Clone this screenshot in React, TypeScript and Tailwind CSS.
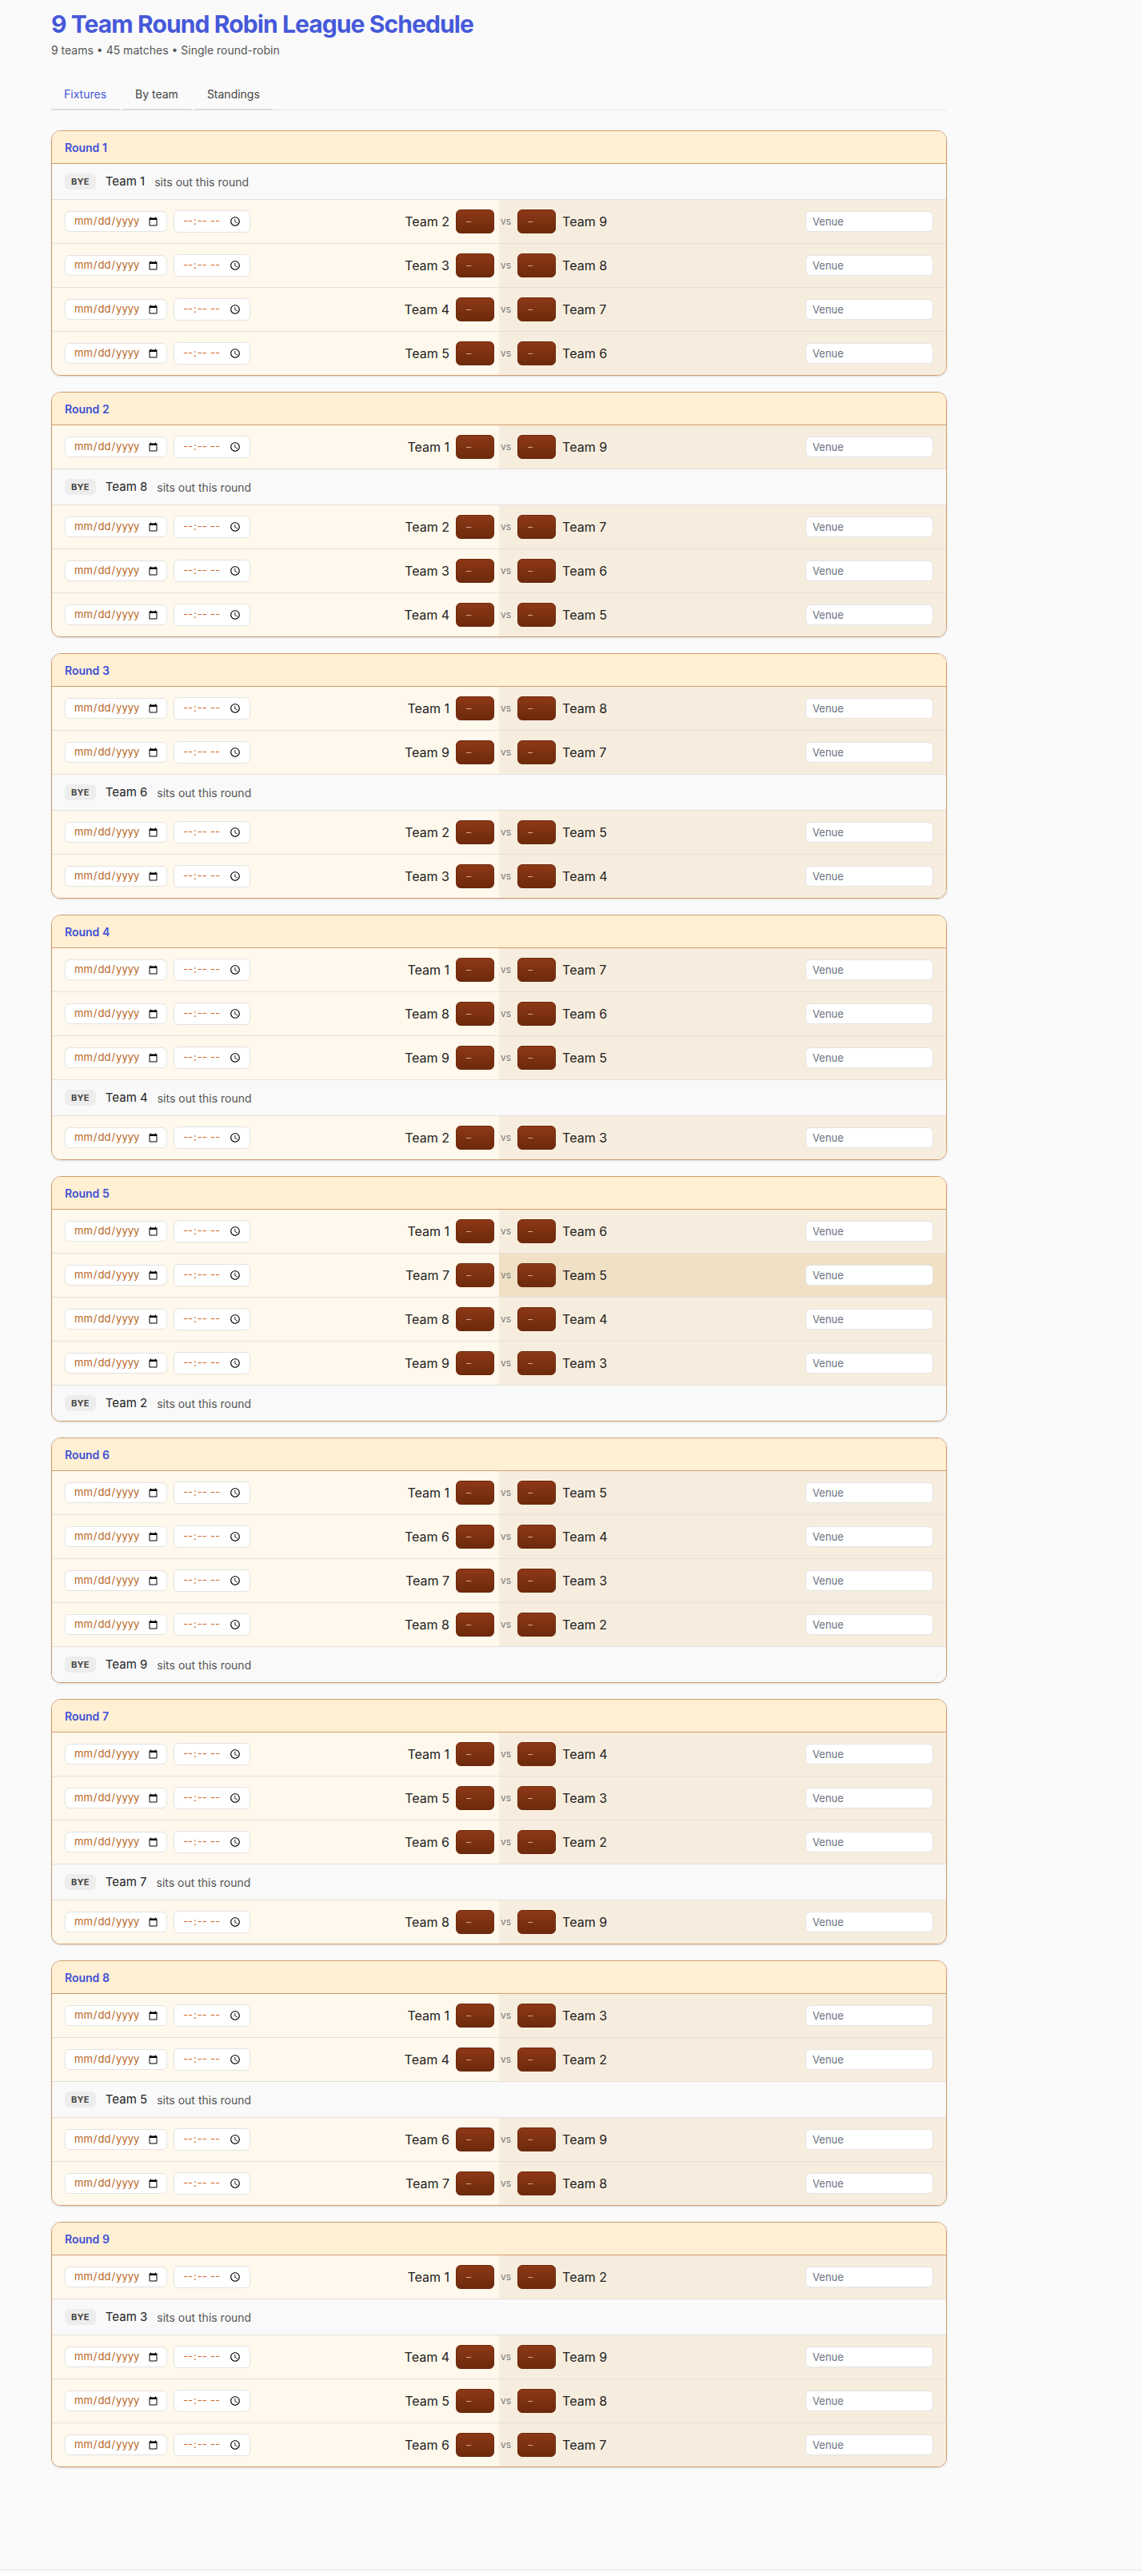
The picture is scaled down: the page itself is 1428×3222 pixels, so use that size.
import React from "react";

type Slot = { bye: string } | { home: string; away: string; hot?: boolean };

const rounds: Slot[][] = [
  [{ bye: "Team 1" }, { home: "Team 2", away: "Team 9" }, { home: "Team 3", away: "Team 8" }, { home: "Team 4", away: "Team 7" }, { home: "Team 5", away: "Team 6" }],
  [{ home: "Team 1", away: "Team 9" }, { bye: "Team 8" }, { home: "Team 2", away: "Team 7" }, { home: "Team 3", away: "Team 6" }, { home: "Team 4", away: "Team 5" }],
  [{ home: "Team 1", away: "Team 8" }, { home: "Team 9", away: "Team 7" }, { bye: "Team 6" }, { home: "Team 2", away: "Team 5" }, { home: "Team 3", away: "Team 4" }],
  [{ home: "Team 1", away: "Team 7" }, { home: "Team 8", away: "Team 6" }, { home: "Team 9", away: "Team 5" }, { bye: "Team 4" }, { home: "Team 2", away: "Team 3" }],
  [{ home: "Team 1", away: "Team 6" }, { home: "Team 7", away: "Team 5", hot: true }, { home: "Team 8", away: "Team 4" }, { home: "Team 9", away: "Team 3" }, { bye: "Team 2" }],
  [{ home: "Team 1", away: "Team 5" }, { home: "Team 6", away: "Team 4" }, { home: "Team 7", away: "Team 3" }, { home: "Team 8", away: "Team 2" }, { bye: "Team 9" }],
  [{ home: "Team 1", away: "Team 4" }, { home: "Team 5", away: "Team 3" }, { home: "Team 6", away: "Team 2" }, { bye: "Team 7" }, { home: "Team 8", away: "Team 9" }],
  [{ home: "Team 1", away: "Team 3" }, { home: "Team 4", away: "Team 2" }, { bye: "Team 5" }, { home: "Team 6", away: "Team 9" }, { home: "Team 7", away: "Team 8" }],
  [{ home: "Team 1", away: "Team 2" }, { bye: "Team 3" }, { home: "Team 4", away: "Team 9" }, { home: "Team 5", away: "Team 8" }, { home: "Team 6", away: "Team 7" }],
];

function ScoreBox() {
  return (
    <div className="flex h-[30px] w-12 shrink-0 items-center rounded-md border border-[#6a280b] bg-gradient-to-b from-[#8d3817] to-[#6d2a0c] pl-[12px] text-[12px] leading-none text-[#d9a58f]">
      –
    </div>
  );
}

function ByeRow({ team }: { team: string }) {
  return (
    <div className="box-content flex h-[44px] items-center gap-3 bg-[#f9f9f9] px-4">
      <span className="flex h-5 items-center rounded-md bg-[#ededed] px-2 text-[11px] font-bold tracking-wide text-[#444]">BYE</span>
      <span className="text-[15px] text-[#222]">{team}</span>
      <span className="text-[14px] text-[#555]">sits out this round</span>
    </div>
  );
}

function MatchRow({ home, away, hot }: { home: string; away: string; hot?: boolean }) {
  return (
    <div className="box-content grid h-[54px] grid-cols-2">
      <div className="flex items-center gap-2 bg-[#fff8ec] pl-4 pr-1.5">
        <input
          type="date"
          className="h-[26px] w-[128px] rounded-md border border-[#e3e3e3] bg-white pl-2.5 pr-2 text-[13px] text-[#b9661d]"
        />
        <input
          type="time"
          className="h-[28px] w-[96px] rounded-md border border-[#e3e3e3] bg-white pl-2.5 pr-2 text-[13px] text-[#d2691e]"
        />
        <span className="ml-auto text-[16px] text-[#222]">{home}</span>
        <ScoreBox />
      </div>
      <div className={`flex items-center gap-2 pl-0.5 pr-4 ${hot ? "bg-[#f0e0c5]" : "bg-[#f7edde]"}`}>
        <span className="text-[12px] text-[#777]">vs</span>
        <ScoreBox />
        <span className="text-[16px] text-[#222]">{away}</span>
        <input
          placeholder="Venue"
          className="ml-auto h-[26px] w-[160px] rounded-md border border-[#e3e3e3] bg-white px-2 text-[13px] text-[#333] placeholder:text-[#6b7280]"
        />
      </div>
    </div>
  );
}

function RoundCard({ n, slots }: { n: number; slots: Slot[] }) {
  return (
    <section className="overflow-hidden rounded-xl border border-[#d19d6e] bg-white shadow-sm">
      <div className="flex h-[41px] items-center border-b border-[#d19d6e] bg-[#ffefd3] px-4">
        <h2 className="text-[14px] font-semibold text-[#3d50d6]">Round {n}</h2>
      </div>
      <div className="divide-y divide-[#e5e1dc]">
        {slots.map((s, i) =>
          "bye" in s ? <ByeRow key={i} team={s.bye} /> : <MatchRow key={i} home={s.home} away={s.away} hot={s.hot} />
        )}
      </div>
    </section>
  );
}

export default function App() {
  const tabs = ["Fixtures", "By team", "Standings"];

  return (
    <div className="min-h-screen bg-[#fafafa] font-['Inter','Liberation_Sans',sans-serif] text-[#222]">
      <main className="px-16 pb-32 pt-[10px]">
        <div className="max-w-[1120px]">
          <h1 className="text-[30px] font-bold leading-[40px] tracking-[-0.03em] text-[#4659d9]">
            9 Team Round Robin League Schedule
          </h1>
          <p className="mt-[3px] text-[14px] leading-5 text-[#555]">9 teams • 45 matches • Single round-robin</p>

          <nav className="mt-[23px] flex gap-1 border-b border-[#e4e4e4]">
            {tabs.map((t, i) => (
              <button
                key={t}
                className={`-mb-px border-b-2 border-[#dcdcdc] px-4 pb-2 pt-3 text-[14px] leading-5 ${
                  i === 0 ? "text-[#4659d9]" : "text-[#444]"
                }`}
              >
                {t}
              </button>
            ))}
          </nav>

          <div className="mt-[25px] space-y-5">
            {rounds.map((slots, i) => (
              <RoundCard key={i} n={i + 1} slots={slots} />
            ))}
          </div>
        </div>
      </main>
      <footer className="h-2 border-t border-[#e2e2e2] bg-white" />
    </div>
  );
}
